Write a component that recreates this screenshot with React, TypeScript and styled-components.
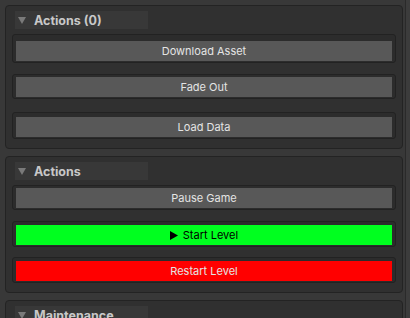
import styled, { createGlobalStyle } from "styled-components";

const GlobalStyle = createGlobalStyle`
  html, body {
    margin: 0;
    padding: 0;
    background: #383838;
    font-family: Inter, "Noto Sans", sans-serif;
  }
`;

type Tone = "default" | "green" | "red";

interface RowProps {
  label: string;
  tone?: Tone;
  icon?: boolean;
  top: number;
  pad: number;
}

const Row = ({ label, tone = "default", icon, top, pad }: RowProps) => (
  <Well $top={top} $pad={pad}>
    <Button $tone={tone}>
      {icon && (
        <svg width="8" height="9" viewBox="0 0 8 9">
          <path d="M0 0 L8 4.5 L0 9 Z" fill="#000" />
        </svg>
      )}
      {label}
    </Button>
  </Well>
);

interface SectionProps {
  title: string;
  rows: RowProps[];
}

const Section = ({ title, rows }: SectionProps) => (
  <Panel>
    <Header>
      <Arrow />
      <Title>{title}</Title>
    </Header>
    {rows.map((r, i) => (
      <Row key={i} {...r} />
    ))}
  </Panel>
);

export default function App() {
  return (
    <>
      <GlobalStyle />
      <Page>
        <Column>
          <Section
            title="Actions (0)"
            rows={[
              { label: "Download Asset", top: 5, pad: 6 },
              { label: "Fade Out", top: 11, pad: 2 },
              { label: "Load Data", top: 13, pad: 4 },
            ]}
          />
          <Section
            title="Actions"
            rows={[
              { label: "Pause Game", top: 5, pad: 2 },
              { label: "Start Level", tone: "green", icon: true, top: 11, pad: 3 },
              { label: "Restart Level", tone: "red", top: 10, pad: 3 },
            ]}
          />
          <Section title="Maintenance" rows={[]} />
        </Column>
        <Scrollbar />
      </Page>
    </>
  );
}

const Page = styled.div`
  display: flex;
  width: 410px;
  height: 318px;
  overflow: hidden;
  padding: 5px 0 0 5px;
  box-sizing: border-box;
`;

const Column = styled.div`
  display: flex;
  flex-direction: column;
  gap: 7px;
  width: 398px;
`;

const Scrollbar = styled.div`
  flex: 1;
  margin-left: 2px;
  margin-top: -5px;
  border-left: 1px solid #2a2a2a;
  background: #3c3c3c;
`;

const Panel = styled.div`
  flex: none;
  border: 1px solid #232323;
  border-radius: 4px;
  background: #303030;
  padding: 5px 6px 9px 6px;
  min-height: 40px;
`;

const Header = styled.div`
  display: flex;
  align-items: center;
  gap: 8px;
  width: 133px;
  height: 18px;
  margin-left: 3px;
  background: #383838;
  padding-left: 3px;
  box-sizing: border-box;
`;

const Arrow = styled.span`
  width: 0;
  height: 0;
  border-left: 4px solid transparent;
  border-right: 4px solid transparent;
  border-top: 7px solid #7a7a7a;
`;

const Title = styled.span`
  color: #c8c8c8;
  font-size: 12.5px;
  font-weight: 700;
`;

const Well = styled.div<{ $top: number; $pad: number }>`
  margin-top: ${(p) => p.$top}px;
  border: 1px solid #222222;
  border-radius: 3px;
  background: #2c2c2c;
  padding: ${(p) => p.$pad}px 3px 1px 3px;
`;

const Button = styled.div<{ $tone: Tone }>`
  display: flex;
  align-items: center;
  justify-content: center;
  gap: 5px;
  height: 20px;
  font-size: 11px;
  background: ${(p) =>
    p.$tone === "green" ? "#00ff1f" : p.$tone === "red" ? "#ff0000" : "#585858"};
  color: ${(p) => (p.$tone === "green" ? "#000000" : "#e4e4e4")};
`;
